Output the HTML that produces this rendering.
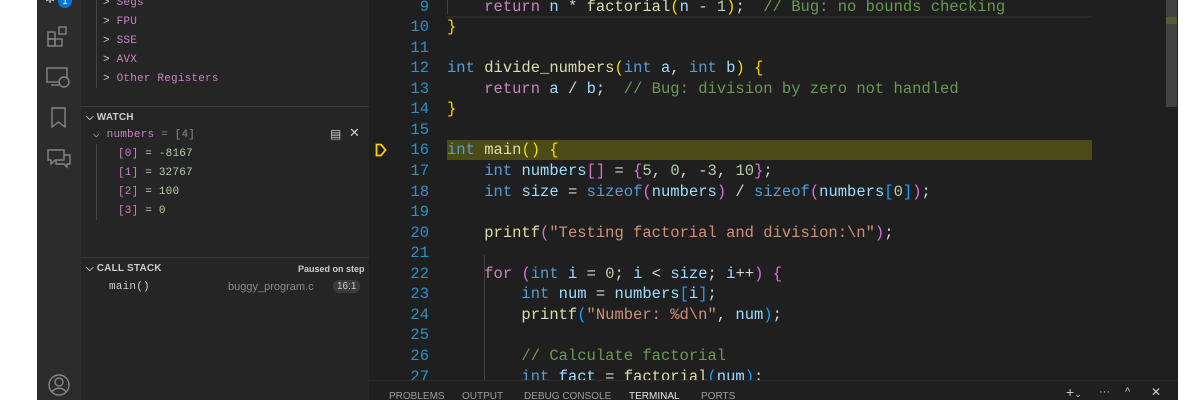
<!DOCTYPE html>
<html style="overflow:hidden;height:400px"><head><meta charset="utf-8"><style>
*{margin:0;padding:0;box-sizing:border-box}
body{width:1200px;height:400px;background:#fff;position:relative;overflow:hidden;font-family:"Liberation Sans",sans-serif}
.abs{position:absolute}
#act{left:37px;top:0;width:44px;height:400px;background:#2c2c2c}
#side{left:81px;top:0;width:288px;height:400px;background:#252526}
#ed{left:369px;top:0;width:809px;height:380px;background:#1f1f1f;overflow:hidden}
.mono{font-family:"Liberation Mono",monospace}
.st{font-size:11px;line-height:19px;white-space:pre;letter-spacing:0.2px}
.p{color:#c586c0}.g{color:#b5cea8}.gr{color:#8c8c8c}.w{color:#cccccc}
.hdr{font-size:10px;font-weight:bold;color:#ccc;letter-spacing:.2px}
#code{position:absolute;left:0;top:-3.5px;font-size:15.5px;line-height:20.56px;white-space:pre}
.ln{position:absolute;left:0;width:60px;text-align:right;color:#2b91c8}
.cl{position:absolute;left:78px;color:#d4d4d4}
.k{color:#569cd6}.c{color:#c586c0}.f{color:#dcdcaa}.v{color:#9cdcfe}.n{color:#b5cea8}.s{color:#ce9178}.m{color:#6a9955}.y{color:#ffd700}.pk{color:#da70d6}.bl{color:#179fff}.o{color:#d4d4d4}
#panel{left:369px;top:380px;width:809px;height:20px;background:#1f1f1f;border-top:1px solid #2b2b2b;overflow:hidden}
.tab{position:absolute;top:10px;font-size:10px;color:#9d9d9d}
</style></head><body>
<div id="act" class="abs">
 <div class="abs" style="left:8px;top:-8px;width:16px;height:14px;color:#ccc;font-size:12px">✲</div>
 <div class="abs" style="left:21px;top:-6px;width:14px;height:14px;border-radius:7px;background:#0078d4;color:#fff;font-size:9px;text-align:center;line-height:14px">1</div>
 <svg class="abs" style="left:10px;top:25px" width="24" height="24" viewBox="0 0 24 24" fill="none" stroke="#858585" stroke-width="1.4"><rect x="1" y="7" width="7" height="7"/><rect x="1" y="14" width="7" height="7"/><rect x="8" y="14" width="7" height="7"/><rect x="12" y="2" width="7" height="7"/></svg>
 <svg class="abs" style="left:9px;top:66px" width="26" height="24" viewBox="0 0 26 24" fill="none" stroke="#858585" stroke-width="1.4"><rect x="1" y="2" width="20" height="14"/><path d="M5 19h8"/><circle cx="18" cy="16" r="5" fill="#2c2c2c"/></svg>
 <svg class="abs" style="left:12px;top:106px" width="20" height="24" viewBox="0 0 20 24" fill="none" stroke="#858585" stroke-width="1.4"><path d="M3 2h13v19l-6.5-5L3 21z"/></svg>
 <svg class="abs" style="left:10px;top:148px" width="24" height="22" viewBox="0 0 24 22" fill="none" stroke="#858585" stroke-width="1.4"><path d="M1 2h16v10H8l-4 4v-4H1z"/><path d="M9 12v4h8l3 3v-3h3V7h-6"/></svg>
 <svg class="abs" style="left:10px;top:373px" width="24" height="24" viewBox="0 0 24 24" fill="none" stroke="#858585" stroke-width="1.4"><circle cx="12" cy="12" r="10"/><circle cx="12" cy="9" r="4"/><path d="M5 19c3-5 11-5 14 0"/></svg>
</div>
<div id="side" class="abs">
 <div class="abs" style="left:15px;top:0;width:1px;height:88px;background:#444"></div>
 <div class="abs mono st" style="left:22px;top:-6px"><span class="w">&gt;</span> <span class="p">Segs</span>
<span class="w">&gt;</span> <span class="p">FPU</span>
<span class="w">&gt;</span> <span class="p">SSE</span>
<span class="w">&gt;</span> <span class="p">AVX</span>
<span class="w">&gt;</span> <span class="p">Other Registers</span></div>
 <div class="abs" style="left:0;top:106px;width:288px;height:1px;background:#3a3a3a"></div>
 <div class="abs hdr" style="left:5px;top:112px">⌵ WATCH</div>
 <div class="abs mono st" style="left:12px;top:126px"><span class="w">⌵</span> <span class="p">numbers</span> <span class="gr">= [4]</span></div>
 <div class="abs" style="left:249px;top:127px;color:#ccc;font-size:12px">▤</div>
 <div class="abs" style="left:268px;top:125px;color:#ccc;font-size:13px">✕</div>
 <div class="abs" style="left:15px;top:144px;width:1px;height:76px;background:#444"></div>
 <div class="abs mono st" style="left:37px;top:145px"><span class="p">[0]</span> <span class="w">=</span> <span class="g">-8167</span>
<span class="p">[1]</span> <span class="w">=</span> <span class="g">32767</span>
<span class="p">[2]</span> <span class="w">=</span> <span class="g">100</span>
<span class="p">[3]</span> <span class="w">=</span> <span class="g">0</span></div>
 <div class="abs" style="left:0;top:257px;width:288px;height:1px;background:#3a3a3a"></div>
 <div class="abs hdr" style="left:5px;top:263px">⌵ CALL STACK</div>
 <div class="abs" style="left:217px;top:264px;font-size:9px;font-weight:bold;color:#ccc">Paused on step</div>
 <div class="abs mono st" style="left:28px;top:278px;color:#ccc">main()</div>
 <div class="abs" style="left:147px;top:281px;font-size:11px;color:#8c8c8c">buggy_program.c</div>
 <div class="abs" style="left:252px;top:280px;font-size:10px;color:#ccc;background:#3a3a3a;border-radius:6px;padding:1px 4px">16:1</div>
</div>
<div id="ed" class="abs">
 <div class="abs" style="left:78px;top:140px;width:645px;height:20px;background:#4b4b18"></div>
 <div class="abs" style="left:78px;top:16px;width:645px;height:2px;background:#2a2a2a"></div>
 <div class="abs" style="left:797px;top:0;width:11px;height:107px;background:#424242"></div>
 <div class="abs" style="left:797px;top:17px;width:11px;height:7px;background:#5a5a30"></div>
 <svg class="abs" style="left:6px;top:143px" width="12" height="14" viewBox="0 0 12 14" fill="none" stroke="#ffcc00" stroke-width="1.8"><path d="M1.5 1.5h4.5l4.5 5.5-4.5 5.5H1.5z"/></svg>
 <div id="code" class="mono">
<div class="ln" style="top:0">9</div><div class="cl" style="top:0">    <span class="c">return</span> <span class="v">n</span> * <span class="f">factorial</span><span class="y">(</span><span class="v">n</span> - <span class="n">1</span><span class="y">)</span>;  <span class="m">// Bug: no bounds checking</span></div>
<div class="ln" style="top:20.56px">10</div><div class="cl" style="top:20.56px"><span class="y">}</span></div>
<div class="ln" style="top:41.12px">11</div>
<div class="ln" style="top:61.68px">12</div><div class="cl" style="top:61.68px"><span class="k">int</span> <span class="f">divide_numbers</span><span class="y">(</span><span class="k">int</span> <span class="v">a</span>, <span class="k">int</span> <span class="v">b</span><span class="y">)</span> <span class="y">{</span></div>
<div class="ln" style="top:82.24px">13</div><div class="cl" style="top:82.24px">    <span class="c">return</span> <span class="v">a</span> / <span class="v">b</span>;  <span class="m">// Bug: division by zero not handled</span></div>
<div class="ln" style="top:102.8px">14</div><div class="cl" style="top:102.8px"><span class="y">}</span></div>
<div class="ln" style="top:123.36px">15</div>
<div class="ln" style="top:143.92px">16</div><div class="cl" style="top:143.92px"><span class="k">int</span> <span class="f">main</span><span class="y">()</span> <span class="y">{</span></div>
<div class="ln" style="top:164.48px">17</div><div class="cl" style="top:164.48px">    <span class="k">int</span> <span class="v">numbers</span><span class="pk">[]</span> = <span class="pk">{</span><span class="n">5</span>, <span class="n">0</span>, -<span class="n">3</span>, <span class="n">10</span><span class="pk">}</span>;</div>
<div class="ln" style="top:185.04px">18</div><div class="cl" style="top:185.04px">    <span class="k">int</span> <span class="v">size</span> = <span class="k">sizeof</span><span class="pk">(</span><span class="v">numbers</span><span class="pk">)</span> / <span class="k">sizeof</span><span class="pk">(</span><span class="v">numbers</span><span class="bl">[</span><span class="n">0</span><span class="bl">]</span><span class="pk">)</span>;</div>
<div class="ln" style="top:205.6px">19</div>
<div class="ln" style="top:226.16px">20</div><div class="cl" style="top:226.16px">    <span class="f">printf</span><span class="pk">(</span><span class="s">"Testing factorial and division:\n"</span><span class="pk">)</span>;</div>
<div class="ln" style="top:246.72px">21</div>
<div class="ln" style="top:267.28px">22</div><div class="cl" style="top:267.28px">    <span class="c">for</span> <span class="pk">(</span><span class="k">int</span> <span class="v">i</span> = <span class="n">0</span>; <span class="v">i</span> &lt; <span class="v">size</span>; <span class="v">i</span>++<span class="pk">)</span> <span class="pk">{</span></div>
<div class="ln" style="top:287.84px">23</div><div class="cl" style="top:287.84px">        <span class="k">int</span> <span class="v">num</span> = <span class="v">numbers</span><span class="bl">[</span><span class="v">i</span><span class="bl">]</span>;</div>
<div class="ln" style="top:308.4px">24</div><div class="cl" style="top:308.4px">        <span class="f">printf</span><span class="bl">(</span><span class="s">"Number: %d\n"</span>, <span class="v">num</span><span class="bl">)</span>;</div>
<div class="ln" style="top:328.96px">25</div>
<div class="ln" style="top:349.52px">26</div><div class="cl" style="top:349.52px">        <span class="m">// Calculate factorial</span></div>
<div class="ln" style="top:370.08px">27</div><div class="cl" style="top:370.08px">        <span class="k">int</span> <span class="v">fact</span> = <span class="f">factorial</span><span class="bl">(</span><span class="v">num</span><span class="bl">)</span>;</div>
 </div>
 <div class="abs" style="left:78px;top:0;width:1px;height:14px;background:#404040"></div>
 <div class="abs" style="left:115px;top:255px;width:1px;height:125px;background:#404040"></div>
</div>
<div id="panel" class="abs">
 <div class="tab" style="left:20px">PROBLEMS</div>
 <div class="tab" style="left:93px">OUTPUT</div>
 <div class="tab" style="left:155px">DEBUG CONSOLE</div>
 <div class="tab" style="left:260px;color:#e7e7e7">TERMINAL</div>
 <div class="tab" style="left:332px">PORTS</div>
 <div class="abs" style="left:697px;top:3px;color:#ccc;font-size:14px">+<span style="font-size:9px">⌄</span></div>
 <div class="abs" style="left:730px;top:5px;color:#ccc;font-size:11px">···</div>
 <div class="abs" style="left:756px;top:5px;color:#ccc;font-size:11px">^</div>
 <div class="abs" style="left:782px;top:4px;color:#ccc;font-size:12px">✕</div>
</div>
</body></html>
